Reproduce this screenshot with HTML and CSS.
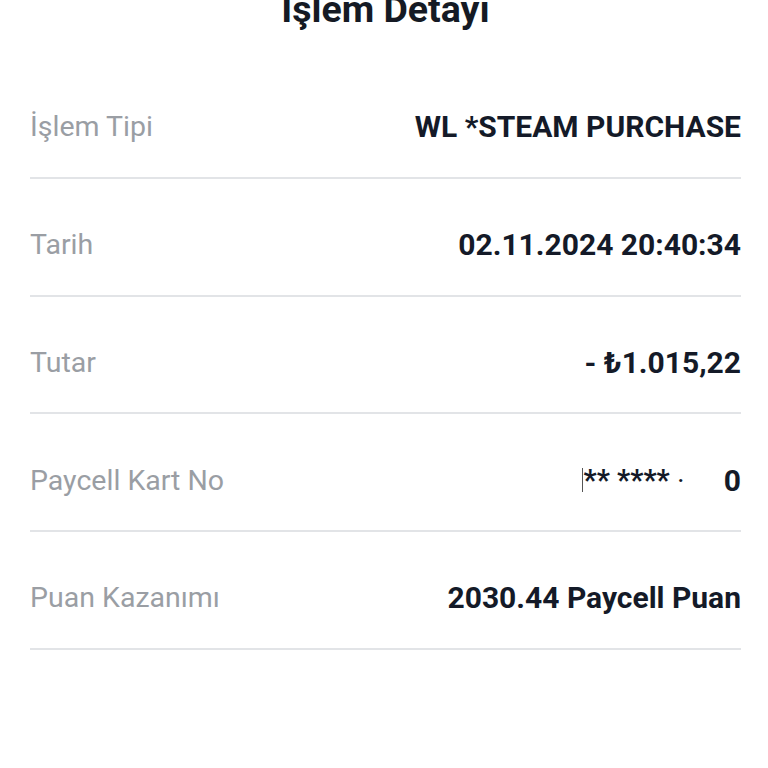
FILE: index.html
```html
<!DOCTYPE html>
<html lang="tr">
<head>
    <meta charset="UTF-8">
    <meta name="viewport" content="width=device-width, initial-scale=1.0">
    <title>İşlem Detayı</title>
    <link rel="stylesheet" href="styles.css">
</head>
<body>
    <div class="page">
        <h1 class="title">İşlem Detayı</h1>
        <div class="details">
            <div class="row">
                <span class="label">İşlem Tipi</span>
                <span class="value">WL *STEAM PURCHASE</span>
            </div>
            <div class="row">
                <span class="label">Tarih</span>
                <span class="value">02.11.2024 20:40:34</span>
            </div>
            <div class="row">
                <span class="label">Tutar</span>
                <span class="value">- ₺1.015,22</span>
            </div>
            <div class="row">
                <span class="label">Paycell Kart No</span>
                <span class="value masked"><span class="mask-edge"></span>** ****<span class="mask-tick">·</span><span class="mask-gap"></span><span class="mask-last">0</span></span>
            </div>
            <div class="row">
                <span class="label">Puan Kazanımı</span>
                <span class="value">2030.44 Paycell Puan</span>
            </div>
        </div>
    </div>
</body>
</html>
```

FILE: styles.css
```css
body {
    margin: 0;
    padding: 0;
    background: #ffffff;
    font-family: Roboto, "Noto Sans", sans-serif;
    overflow: hidden;
}
.page {
    padding: 0 27px 0 30px;
}
.title {
    margin: -13px 0 0 0;
    height: 74px;
    font-size: 37.5px;
    font-weight: 700;
    line-height: 44px;
    color: #151a24;
    text-align: center;
}
.details {
    display: flex;
    flex-direction: column;
}
.row {
    display: flex;
    justify-content: space-between;
    align-items: center;
    height: 117.75px;
    padding-top: 16px;
    box-sizing: border-box;
    border-bottom: 2px solid #e2e4e7;
}
.label {
    font-size: 28.5px;
    color: #9a9ea4;
}
.value {
    font-size: 30px;
    font-weight: 700;
    color: #141a28;
}
.masked {
    display: flex;
    align-items: center;
    font-size: 29px;
}
.mask-edge {
    display: inline-block;
    width: 1px;
    height: 24px;
    background: #555;
    margin-right: 1px;
}
.mask-tick {
    margin-left: 8px;
    font-size: 20px;
}
.mask-gap {
    display: inline-block;
    width: 40px;
}
.mask-last {
    font-size: 30px;
}
```
